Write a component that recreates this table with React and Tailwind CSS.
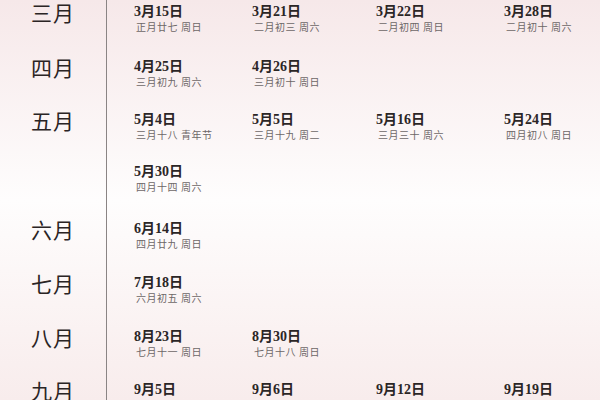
const rows = [
  { month: '三月', h: 'h-[55px]', items: [['3月15日', '正月廿七 周日'], ['3月21日', '二月初三 周六'], ['3月22日', '二月初四 周日'], ['3月28日', '二月初十 周六']] },
  { month: '四月', h: 'h-[53px]', items: [['4月25日', '三月初九 周六'], ['4月26日', '三月初十 周日']] },
  { month: '五月', h: 'h-[52px]', items: [['5月4日', '三月十八 青年节'], ['5月5日', '三月十九 周二'], ['5月16日', '三月三十 周六'], ['5月24日', '四月初八 周日']] },
  { month: '', h: 'h-[57px]', items: [['5月30日', '四月十四 周六']] },
  { month: '六月', h: 'h-[54px]', items: [['6月14日', '四月廿九 周日']] },
  { month: '七月', h: 'h-[54px]', items: [['7月18日', '六月初五 周六']] },
  { month: '八月', h: 'h-[53px]', items: [['8月23日', '七月十一 周日'], ['8月30日', '七月十八 周日']] },
  { month: '九月', h: 'h-[40px]', items: [['9月5日', ''], ['9月6日', ''], ['9月12日', ''], ['9月19日', '']] },
];

const colWidths = ['w-[118px]', 'w-[124px]', 'w-[128px]', 'w-[95px]'];

const font = { fontFamily: '"Liberation Serif", "Noto Sans CJK SC", serif' };

export default function App() {
  return (
    <div
      className="w-[600px] h-[400px] overflow-hidden bg-gradient-to-b from-[#f6e8e9] via-[#fefdfd] to-[#f8ecec]"
      style={font}
    >
      {rows.map((row, i) => (
        <div key={i} className={`flex ${row.h}`}>
          <div className="w-[107px] shrink-0 border-r border-[#8a8484] flex justify-center pt-[4px]">
            <span className="text-[21px] leading-[21px] text-[#2a2424] tracking-[1px]">{row.month}</span>
          </div>
          <div className="flex pl-[27px] pt-[5px]">
            {row.items.map(([date, sub], j) => (
              <div key={j} className={`${colWidths[j]} flex flex-col`}>
                <span className="text-[14px] leading-[14px] font-bold text-[#2b2626]">{date}</span>
                {sub && (
                  <span className="mt-[4px] ml-[2px] text-[10px] leading-[10px] tracking-[0.5px] text-[#6d6767] whitespace-nowrap">{sub}</span>
                )}
              </div>
            ))}
          </div>
        </div>
      ))}
    </div>
  );
}
